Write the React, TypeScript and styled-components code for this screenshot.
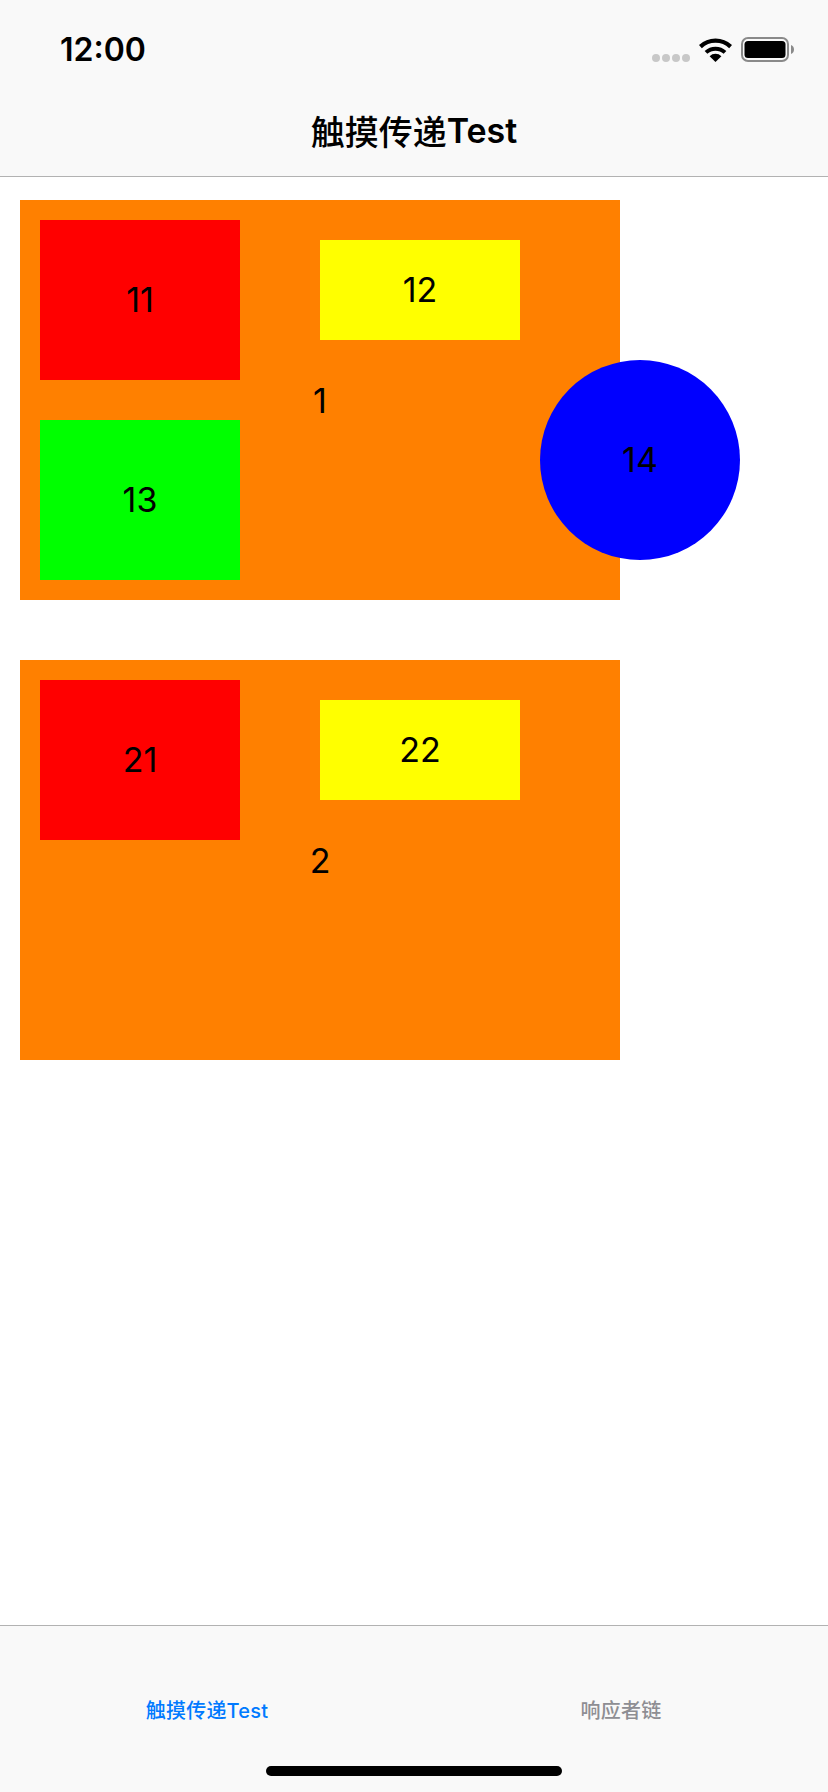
import React from 'react'
import styled, { createGlobalStyle } from 'styled-components'

const GlobalStyle = createGlobalStyle`
  html, body {
    margin: 0;
    padding: 0;
    background: #fff;
  }
  body {
    font-family: Inter, "Liberation Sans", "Noto Sans CJK SC", sans-serif;
    color: #000;
  }
`

const Screen = styled.div`
  width: 828px;
  height: 1792px;
  display: flex;
  flex-direction: column;
  overflow: hidden;
`

const Header = styled.header`
  height: 177px;
  flex: none;
  box-sizing: border-box;
  background: #f9f9f9;
  border-bottom: 1px solid #b2b2b2;
  display: flex;
  flex-direction: column;
`

const StatusBar = styled.div`
  height: 88px;
  box-sizing: border-box;
  padding: 11px 34px 0 60px;
  display: flex;
  align-items: center;
  justify-content: space-between;
`

const Time = styled.span`
  font-size: 32px;
  font-weight: 600;
  line-height: 1;
`

const StatusIcons = styled.div`
  display: flex;
  align-items: center;
  gap: 9px;
`

const SignalDots = styled.div`
  display: flex;
  gap: 2px;
  margin-top: 16px;
`

const SignalDot = styled.i`
  width: 8px;
  height: 8px;
  border-radius: 50%;
  background: #c8c8c8;
`

const Title = styled.h1`
  margin: 0;
  padding-bottom: 3px;
  flex: 1;
  display: flex;
  align-items: center;
  justify-content: center;
  font-size: 34px;
  font-weight: 500;
`

const TitleLatin = styled.span`
  font-weight: 600;
`

const Content = styled.main`
  flex: 1;
  padding: 23px 20px 0;
  display: flex;
  flex-direction: column;
  gap: 60px;
  background: #fff;
`

const Panel = styled.section`
  position: relative;
  width: 600px;
  height: 400px;
  box-sizing: border-box;
  padding: 20px;
  background: #ff8000;
  display: grid;
  grid-template-columns: 200px 200px 0;
  grid-template-rows: 160px 160px;
  column-gap: 80px;
  row-gap: 40px;
`

const PanelLabel = styled.span`
  grid-area: 1 / 1 / 3 / 4;
  place-self: center;
  font-size: 34px;
`

const Tile = styled.div<{ $color: string }>`
  box-sizing: border-box;
  padding-bottom: 2px;
  background: ${(p) => p.$color};
  font-size: 34px;
  display: flex;
  align-items: center;
  justify-content: center;
`

const RedTile = styled(Tile)`
  grid-area: 1 / 1;
`

const YellowTile = styled(Tile)`
  grid-area: 1 / 2;
  height: 100px;
  margin-top: 20px;
`

const GreenTile = styled(Tile)`
  grid-area: 2 / 1;
`

const Circle = styled(Tile)`
  position: absolute;
  left: 520px;
  top: 160px;
  width: 200px;
  height: 200px;
  border-radius: 50%;
`

const TabBar = styled.nav`
  height: 167px;
  flex: none;
  position: relative;
  box-sizing: border-box;
  background: #f9f9f9;
  border-top: 1px solid #b2b2b2;
  display: grid;
  grid-template-columns: 1fr 1fr;
  padding: 0 0 69px;
`

const Tab = styled.span<{ $active?: boolean }>`
  display: flex;
  align-items: flex-end;
  justify-content: center;
  font-size: 20px;
  font-weight: 500;
  line-height: 24px;
  letter-spacing: 0.2px;
  color: ${(p) => (p.$active ? '#007aff' : '#8e8e93')};
`

const HomeIndicator = styled.div`
  position: absolute;
  left: 266px;
  bottom: 16px;
  width: 296px;
  height: 10px;
  border-radius: 5px;
  background: #000;
`

function WifiIcon() {
  return (
    <svg width="33" height="24" viewBox="0 0 33 24">
      <path d="M1.4 8.6 A22 22 0 0 1 31.6 8.6" fill="none" stroke="#000" strokeWidth="4.2" />
      <path d="M7 14.4 A14 14 0 0 1 26 14.4" fill="none" stroke="#000" strokeWidth="4" />
      <path d="M16.5 24 L10.6 18.2 A8.6 8.6 0 0 1 22.4 18.2 Z" fill="#000" />
    </svg>
  )
}

function BatteryIcon() {
  return (
    <svg width="53" height="25" viewBox="0 0 53 25">
      <rect x="1" y="1" width="46" height="23" rx="6" fill="none" stroke="#8a8a8a" strokeWidth="2" />
      <rect x="3.5" y="4" width="41" height="17" rx="3.5" fill="#000" />
      <path d="M50 8 C52 8.6 53 10.4 53 12.5 C53 14.6 52 16.4 50 17 Z" fill="#8a8a8a" />
    </svg>
  )
}

export default function App() {
  return (
    <Screen>
      <GlobalStyle />
      <Header>
        <StatusBar>
          <Time>12:00</Time>
          <StatusIcons>
            <SignalDots>
              <SignalDot />
              <SignalDot />
              <SignalDot />
              <SignalDot />
            </SignalDots>
            <WifiIcon />
            <BatteryIcon />
          </StatusIcons>
        </StatusBar>
        <Title>
          触摸传递<TitleLatin>Test</TitleLatin>
        </Title>
      </Header>
      <Content>
        <Panel>
          <PanelLabel>1</PanelLabel>
          <RedTile $color="#ff0000">11</RedTile>
          <YellowTile $color="#ffff00">12</YellowTile>
          <GreenTile $color="#00ff00">13</GreenTile>
          <Circle $color="#0000ff">14</Circle>
        </Panel>
        <Panel>
          <PanelLabel>2</PanelLabel>
          <RedTile $color="#ff0000">21</RedTile>
          <YellowTile $color="#ffff00">22</YellowTile>
        </Panel>
      </Content>
      <TabBar>
        <Tab $active>触摸传递Test</Tab>
        <Tab>响应者链</Tab>
        <HomeIndicator />
      </TabBar>
    </Screen>
  )
}
